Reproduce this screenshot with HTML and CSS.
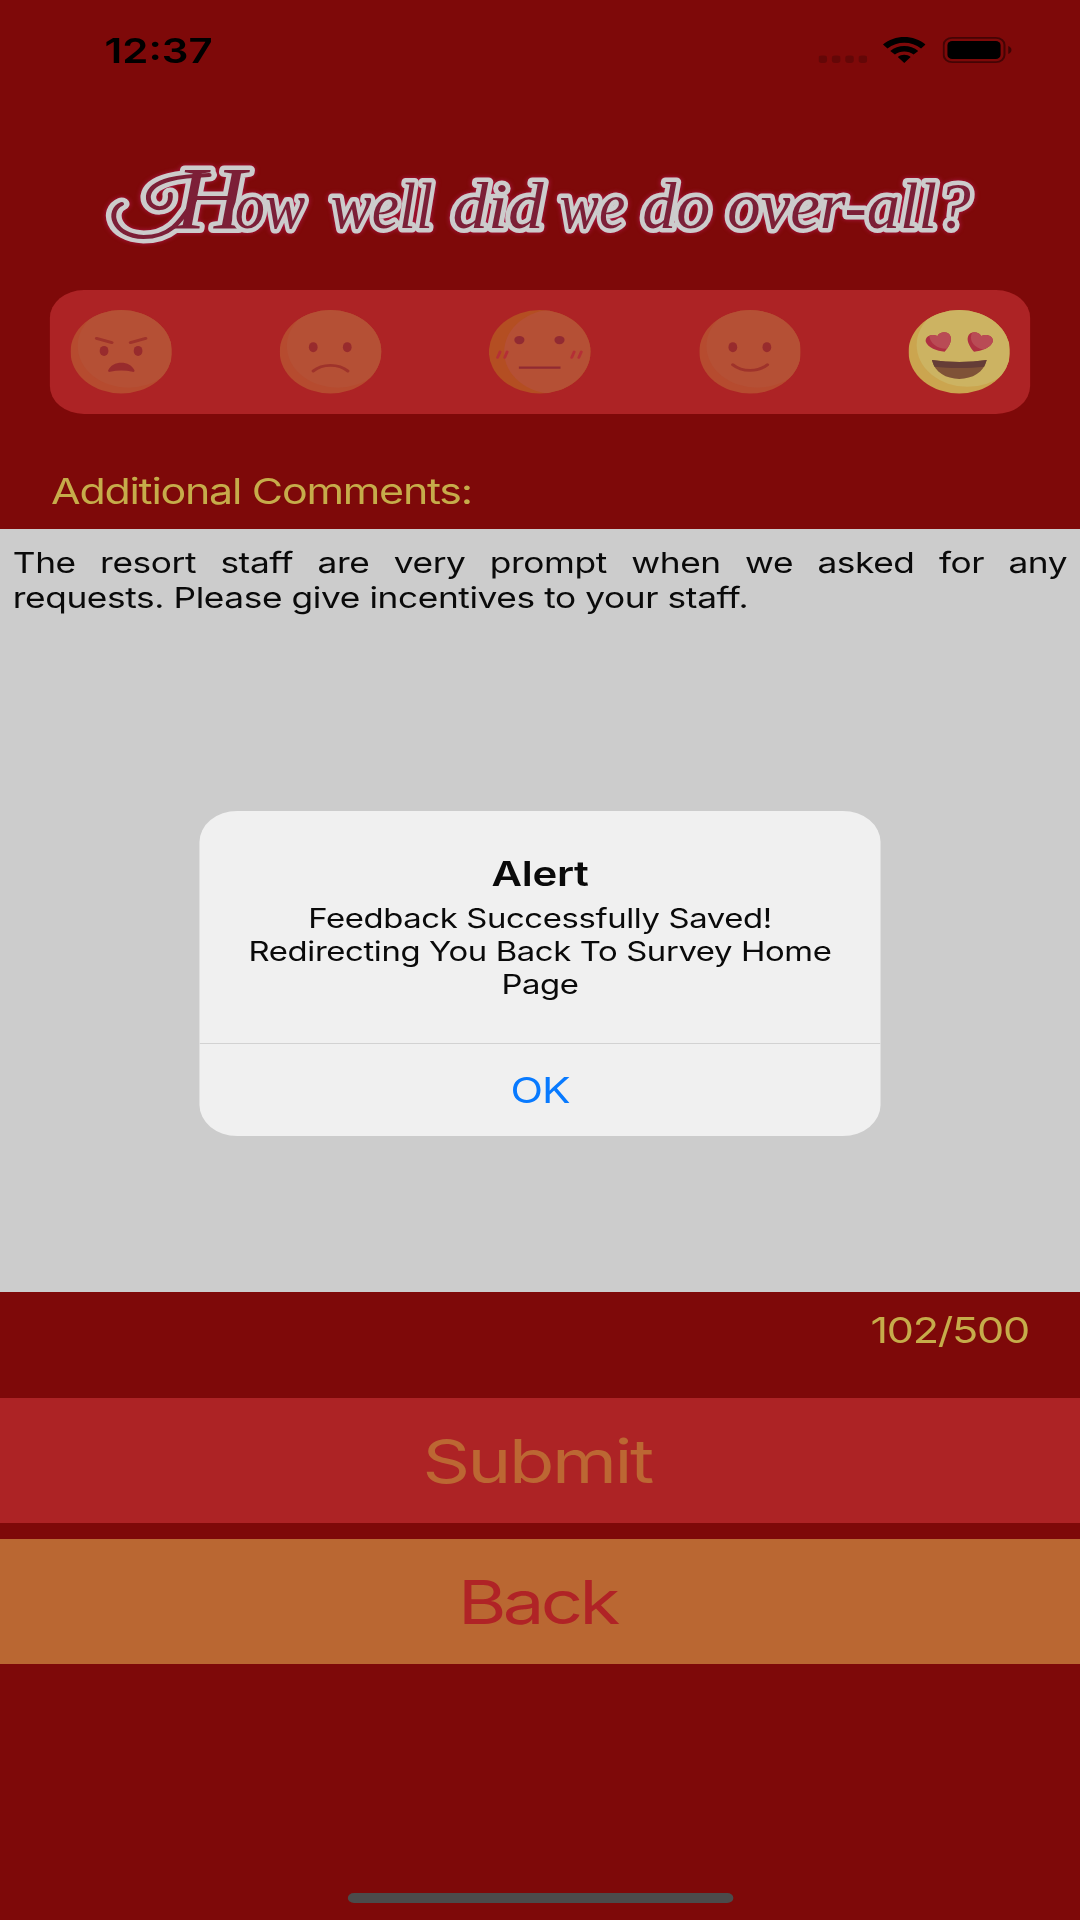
FILE: index.html
```html
<!DOCTYPE html>
<html lang="en">
<head>
<meta charset="utf-8">
<title>Survey</title>
<link rel="stylesheet" href="styles.css">
</head>
<body>
<div class="screen">
  <header class="status">
    <span class="time">12:37</span>
    <div class="indicators">
      <svg class="cell" viewBox="0 0 40 26"><g fill="#000" fill-opacity=".2"><rect x="0" y="18.500" width="7" height="7.500" rx="2.400"/><rect x="11" y="18.500" width="7" height="7.500" rx="2.400"/><rect x="22" y="18.500" width="7" height="7.500" rx="2.400"/><rect x="33" y="18.500" width="7" height="7.500" rx="2.400"/></g></svg>
      <svg class="wifi" viewBox="0 0 35 26"><path d="M0 7.600C9.500-2.500 25.500-2.500 35 7.600L31.300 11.400C23.500 3.700 11.500 3.700 3.700 11.400ZM6 13.900C12.400 7.200 22.600 7.200 29 13.900L25.200 17.600C21 13.300 14 13.300 9.800 17.600ZM12.200 20C15.200 17 19.800 17 22.800 20L17.500 26Z"/></svg>
      <svg class="battery" viewBox="0 0 57 26"><rect x=".9" y=".9" width="50" height="24.200" rx="7" fill="none" stroke="#000" stroke-opacity=".45" stroke-width="1.700"/><rect x="4" y="4" width="43.700" height="18" rx="4" fill="#000"/><path d="M54 9V17C57.600 15.500 57.600 10.500 54 9Z" fill="#000" fill-opacity=".5"/></svg>
    </div>
  </header>

  <h1 class="title">
    <svg viewBox="0 0 888 110">
      <defs>
        <path id="flourish" d="M100 54C88 60 92 86 118 87C142 87 150 68 160 50M140 44C142 63 121 62 122 46C124 29 150 26 172 25"/>
      </defs>
      <g class="script">
        <use class="flourish-edge" href="#flourish"/>
        <text y="78"><tspan class="cap" x="144" textLength="58" lengthAdjust="spacingAndGlyphs">H</tspan><tspan x="193" textLength="58" lengthAdjust="spacingAndGlyphs">ow</tspan> <tspan x="272" textLength="84" lengthAdjust="spacingAndGlyphs">well</tspan> <tspan x="372" textLength="75" lengthAdjust="spacingAndGlyphs">did</tspan> <tspan x="460" textLength="54" lengthAdjust="spacingAndGlyphs">we</tspan> <tspan x="528" textLength="56" lengthAdjust="spacingAndGlyphs">do</tspan> <tspan x="598" textLength="200" lengthAdjust="spacingAndGlyphs">over-all?</tspan></text>
        <use class="flourish" href="#flourish"/>
      </g>
    </svg>
  </h1>

  <div class="ratings">
    <svg class="face" viewBox="0 0 100 100">
      <circle class="shade" cx="50" cy="50" r="50"/><circle class="skin" cx="57" cy="43" r="50" clip-path="url(#disc)"/>
      <g class="line"><path d="M25.600 34 40.700 39M59 39 74 34"/></g>
      <g class="ink"><ellipse cx="33" cy="49" rx="4.300" ry="6"/><ellipse cx="66.500" cy="49" rx="4.300" ry="6"/><path d="M37 72.500C41 60 59 60 63 72.500C63.300 74 62 74.400 61 74C54 72 46 72 39 74C38 74.400 36.700 74 37 72.500Z"/></g>
    </svg>
    <svg class="face" viewBox="0 0 100 100">
      <circle class="shade" cx="50" cy="50" r="50"/><circle class="skin" cx="57" cy="43" r="50" clip-path="url(#disc)"/>
      <g class="line"><path d="M33 73C42 64 58 64 67 73"/></g>
      <g class="ink"><ellipse cx="33" cy="44.500" rx="4.300" ry="6"/><ellipse cx="66.500" cy="44.500" rx="4.300" ry="6"/></g>
    </svg>
    <svg class="face neutral" viewBox="0 0 100 100">
      <circle class="shade" cx="50" cy="50" r="50"/><circle class="skin" cx="66" cy="50" r="51" clip-path="url(#disc)"/>
      <path class="blush" d="M11 50 8.500 57M18 50 15.500 57M84 50 81.500 57M91 50 88.500 57"/>
      <path class="flat" d="M29.500 69H70.500"/>
      <g class="dots"><circle cx="30" cy="36" r="5"/><circle cx="69.500" cy="36" r="5"/></g>
    </svg>
    <svg class="face" viewBox="0 0 100 100">
      <circle class="shade" cx="50" cy="50" r="50"/><circle class="skin" cx="57" cy="43" r="50" clip-path="url(#disc)"/>
      <g class="line"><path d="M33 65.500C42 74.500 58 74.500 67 65.500"/></g>
      <g class="ink"><ellipse cx="33" cy="44.500" rx="4.300" ry="6"/><ellipse cx="66.500" cy="44.500" rx="4.300" ry="6"/></g>
    </svg>
    <svg class="face love" viewBox="0 0 100 100">
      <defs>
        <clipPath id="disc"><circle cx="50" cy="50" r="50"/></clipPath>
        <path id="heart" d="M35.500 50C28 49 19 45 17 38C16 31 23 28 28.500 31C31 25 40 25 41.500 32C43 38 39 45 35.500 50Z"/>
        <clipPath id="heart-clip"><use href="#heart"/></clipPath>
      </defs>
      <circle class="shade" cx="50" cy="50" r="50"/><circle class="skin" cx="58" cy="42" r="50" clip-path="url(#disc)"/>
      <use href="#heart" fill="#af3042"/><circle cx="37" cy="30" r="16.500" fill="#b94b55" clip-path="url(#heart-clip)"/>
      <g transform="translate(100 0) scale(-1 1)"><use href="#heart" fill="#af3042"/><circle cx="24" cy="33" r="14.500" fill="#b94b55" clip-path="url(#heart-clip)"/></g>
      <path d="M23 60C40 63 60 63 77 60C74 75 63 82.500 50 82.500S26 75 23 60Z" fill="#7f5237"/>
      <path d="M23 60C40 63 60 63 77 60L74.500 68C60 70 40 70 25.500 68Z" fill="#653d37"/>
    </svg>
  </div>

  <div class="label" id="comments-label">Additional Comments:</div>
  <div class="comments" role="textbox" aria-labelledby="comments-label">The resort staff are very prompt when we asked for any requests. Please give incentives to your staff.</div>
  <div class="counter">102/500</div>
  <button class="button submit">Submit</button>
  <button class="button back">Back</button>
  <footer class="home"><span class="bar"></span></footer>

  <div class="alert" role="alertdialog">
    <div class="body">
      <h2 class="heading">Alert</h2>
      <p class="message">Feedback Successfully Saved!<br>Redirecting You Back To Survey Home<br>Page</p>
    </div>
    <button class="ok">OK</button>
  </div>
</div>
</body>
</html>
```
FILE: styles.css
```css
* { box-sizing: border-box; }

body {
  margin: 0;
  width: 1080px;
  height: 1920px;
  overflow: hidden;
  background: #7e0909;
}

/* The layout is 888 units wide and stretched to the full window width. */
.screen {
  position: relative;
  display: flex;
  flex-direction: column;
  width: 888px;
  height: 1920px;
  transform: scaleX(1.216216);
  transform-origin: 0 0;
  font-family: Inter, "Liberation Sans", sans-serif;
  color: #0a0a0a;
}

svg { display: block; }
button { border: 0; padding: 0; margin: 0; font: inherit; }

.status {
  display: flex;
  justify-content: space-between;
  height: 100px;
  padding: 0 56.500px 0 86px;
  color: #000;
}
.time { font-size: 34.500px; font-weight: 600; line-height: 101px; white-space: nowrap; }
.indicators { display: flex; padding-top: 37px; gap: 13.500px; }
.cell { width: 40px; height: 26px; }
.wifi { width: 35px; height: 26px; }
.battery { width: 57px; height: 26px; }

.title { margin: 50px 0 0; height: 110px; }
.title svg { width: 888px; height: 110px; overflow: visible; }
.script {
  font-family: "Liberation Serif", serif;
  font-style: italic;
  font-weight: 400;
  font-size: 65px;
  fill: #7c1f37;
  stroke: #ccc;
  stroke-width: 9px;
  stroke-linejoin: round;
  stroke-linecap: round;
  paint-order: stroke;
  filter: drop-shadow(0 0 2px #b0184a);
}
.cap { font-size: 88px; }
.flourish-edge { fill: none; stroke-width: 13px; }
.flourish { fill: none; stroke: #7c1f37; stroke-width: 4px; }

.ratings {
  display: flex;
  justify-content: space-between;
  align-items: center;
  margin: 29.500px 41.300px 0;
  padding: 0 16.400px 0 16.700px;
  height: 124.500px;
  border-radius: 28px;
  background: #ad2325;
}
.face { width: 83.500px; height: 83.500px; }
.shade { fill: #b64b2f; }
.skin { fill: #b55035; }
.line { fill: none; stroke: #9f332b; stroke-width: 3.400px; stroke-linecap: round; }
.ink { fill: #982b2d; }
.neutral .shade { fill: #b44e22; }
.blush { fill: none; stroke: #b52f36; stroke-width: 2.800px; stroke-linecap: round; }
.flat { stroke: #922a32; stroke-width: 2.800px; }
.dots { fill: #922a32; }
.love .shade { fill: #cba54f; }
.love .skin { fill: #ccb362; }

.label {
  margin-top: 51px;
  padding-left: 42px;
  height: 64px;
  font-size: 35.300px;
  letter-spacing: -1.040px;
  line-height: 54px;
  color: #c6ac4a;
}
.comments {
  height: 763px;
  padding: 16px 10.500px 0 10.500px;
  background: #ccc;
  font-size: 29px;
  letter-spacing: -.330px;
  line-height: 35.300px;
  text-align: justify;
}
.counter {
  height: 106px;
  padding-right: 42px;
  font-size: 35.500px;
  letter-spacing: -1.050px;
  line-height: 77px;
  text-align: right;
  color: #c6ac4a;
}
.button { height: 124.500px; font-size: 61px; line-height: 126.500px; }
.submit { padding-right: 4.600px; background: #ad2325; color: #bc6733; letter-spacing: -2px; }
.back { margin-top: 16.500px; padding-right: 4.500px; background: #ba6732; color: #b02326; letter-spacing: -3px; }
.home { display: flex; flex: 1; justify-content: center; align-items: flex-end; padding-bottom: 17px; }
.bar { width: 317px; height: 10px; border-radius: 5px; background: #4b4b4b; }

.alert {
  position: absolute;
  left: 164px;
  top: 811px;
  width: 560px;
  height: 324.500px;
  border-radius: 31px;
  background: #f0f0f0;
  overflow: hidden;
}
.body { height: 233px; padding-top: 41px; border-bottom: 1.500px solid #d2d2d2; text-align: center; }
.heading { margin: 0; font-size: 34.500px; font-weight: 600; letter-spacing: -.250px; line-height: 44px; }
.message { margin: 5.500px 0 0; font-size: 27px; letter-spacing: -.310px; line-height: 33.200px; white-space: nowrap; }
.ok { display: block; width: 100%; height: 90px; background: none; color: #087aff; font-size: 35px; letter-spacing: -.800px; line-height: 93px; }
```
